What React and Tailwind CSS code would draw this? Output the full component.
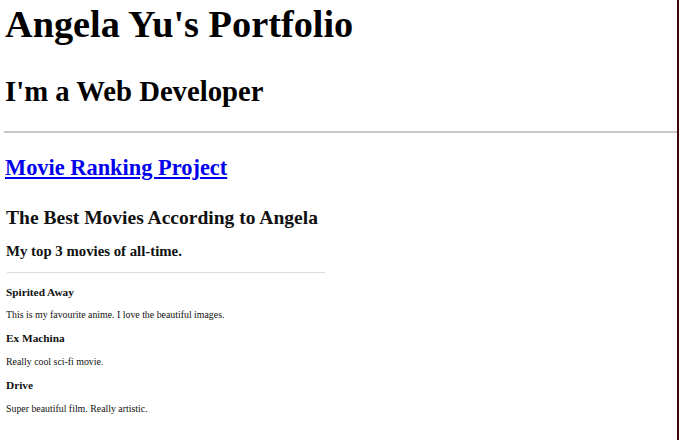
export default function App() {
  return (
    <div className="flex w-[679px] h-[440px] overflow-hidden bg-white font-['Liberation_Serif',serif] text-black">
      <div className="flex-1 flex flex-col">
        <h1 className="mt-[2px] pl-[5px] h-[44px] leading-[44px] text-[38.3px] font-bold whitespace-nowrap">
          Angela Yu's Portfolio
        </h1>
        <h2 className="mt-[28px] pl-[5px] h-[34px] leading-[34px] text-[28.7px] font-bold whitespace-nowrap">
          I'm a Web Developer
        </h2>
        <div className="mt-[23px] ml-[4px] h-[2px] bg-[#c6c6c6]" />
        <div className="mt-[21px] pl-[5px] h-[28px] leading-[28px] text-[22.4px] font-bold whitespace-nowrap">
          <a href="#" className="text-[#0000ee] underline">
            Movie Ranking Project
          </a>
        </div>
        <div className="text-[#111]">
          <h3 className="mt-[24px] pl-[6px] h-[24px] leading-[24px] text-[19.55px] font-bold whitespace-nowrap">
            The Best Movies According to Angela
          </h3>
          <h4 className="mt-[12px] pl-[6px] h-[18px] leading-[18px] text-[14.8px] font-bold whitespace-nowrap">
            My top 3 movies of all-time.
          </h4>
          <div className="mt-[12px] ml-[7px] w-[318px] h-[1px] bg-[#dcdcdc]" />
          <h5 className="mt-[12px] pl-[6px] h-[14px] leading-[14px] text-[11.3px] font-bold whitespace-nowrap">
            Spirited Away
          </h5>
          <p className="mt-[10px] pl-[6px] h-[12px] leading-[12px] text-[9.85px] whitespace-nowrap">
            This is my favourite anime. I love the beautiful images.
          </p>
          <h5 className="mt-[10px] pl-[6px] h-[14px] leading-[14px] text-[11.3px] font-bold whitespace-nowrap">
            Ex Machina
          </h5>
          <p className="mt-[11px] pl-[6px] h-[12px] leading-[12px] text-[9.85px] whitespace-nowrap">
            Really cool sci-fi movie.
          </p>
          <h5 className="mt-[10px] pl-[6px] h-[14px] leading-[14px] text-[11.3px] font-bold whitespace-nowrap">
            Drive
          </h5>
          <p className="mt-[11px] pl-[6px] h-[12px] leading-[12px] text-[9.85px] whitespace-nowrap">
            Super beautiful film. Really artistic.
          </p>
        </div>
      </div>
      <div className="w-[2px] h-full bg-[#3d0606]" />
    </div>
  );
}
